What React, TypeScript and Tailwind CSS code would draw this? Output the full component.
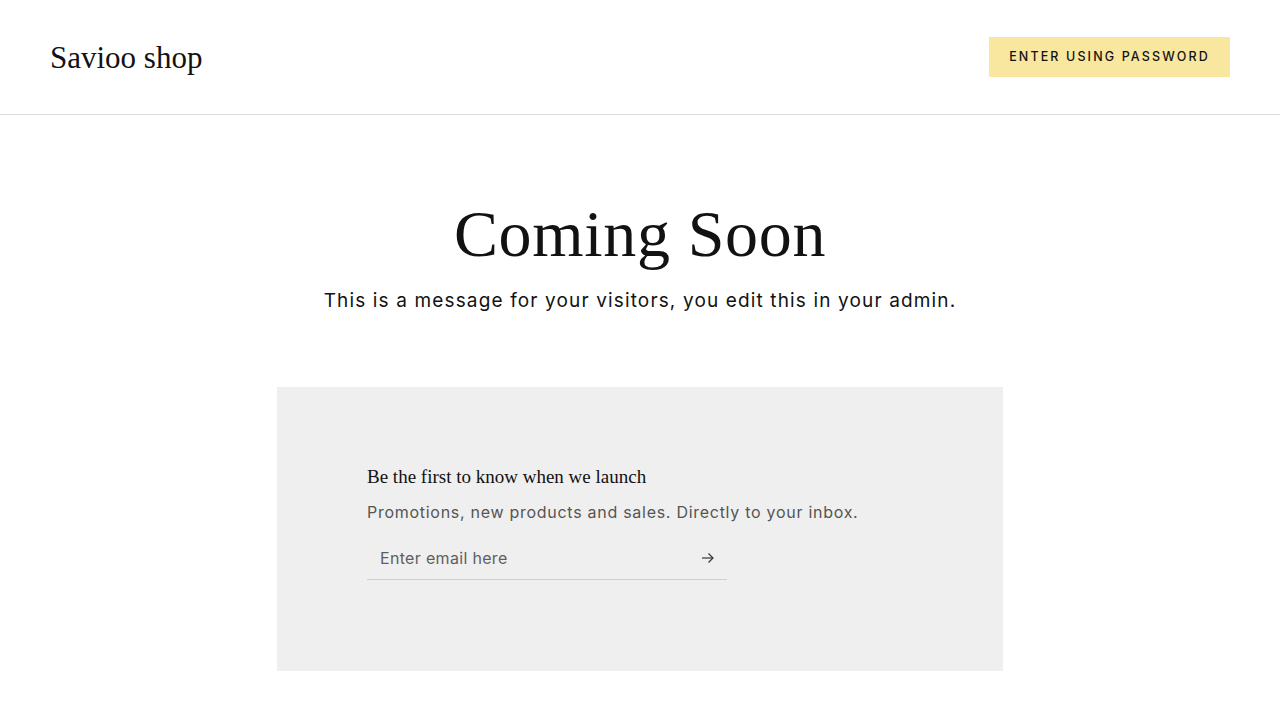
export default function App() {
  const serif = { fontFamily: '"Liberation Serif", "DejaVu Serif", serif' };
  return (
    <div className="min-h-screen bg-white text-[#121212]" style={{ fontFamily: 'Inter, "Liberation Sans", sans-serif' }}>
      {/* Header */}
      <header className="h-[115px] border-b border-[#dcdcdc] flex items-center justify-between px-[50px]">
        <h1 className="text-[31px] leading-none text-[#121212]" style={serif}>
          Savioo shop
        </h1>
        <button className="h-10 w-[241px] bg-[#f9e79f] text-[12.5px] font-medium tracking-[0.17em] text-[#121212] uppercase">
          Enter using password
        </button>
      </header>

      {/* Hero */}
      <main className="flex flex-col items-center">
        <h2 className="mt-[86px] text-[66px] leading-none tracking-[0.01em] text-[#121212]" style={serif}>
          Coming Soon
        </h2>
        <p className="mt-[20px] text-[19px] tracking-[0.06em] text-[#121212]">
          This is a message for your visitors, you edit this in your admin.
        </p>

        {/* Newsletter */}
        <section className="mt-[71px] w-[726px] h-[284px] bg-[#efefef] px-[90px] pt-[78px]">
          <h3 className="text-[19px] leading-tight text-[#121212]" style={serif}>
            Be the first to know when we launch
          </h3>
          <p className="mt-[12px] text-[16px] tracking-[0.045em] text-[#555555]">
            Promotions, new products and sales. Directly to your inbox.
          </p>
          <div className="mt-[13px] w-[360px] h-[43px] border-b border-[#cfcfcf] flex items-center justify-between pl-[13px] pr-[12px]">
            <span className="text-[16px] tracking-[0.02em] text-[#5f5f5f]">Enter email here</span>
            <svg width="14" height="12" viewBox="0 0 14 12" fill="none" stroke="#333" strokeWidth="1.2">
              <path d="M1 6h11" />
              <path d="M7.5 1.5L12 6l-4.5 4.5" />
            </svg>
          </div>
        </section>
      </main>
    </div>
  );
}
